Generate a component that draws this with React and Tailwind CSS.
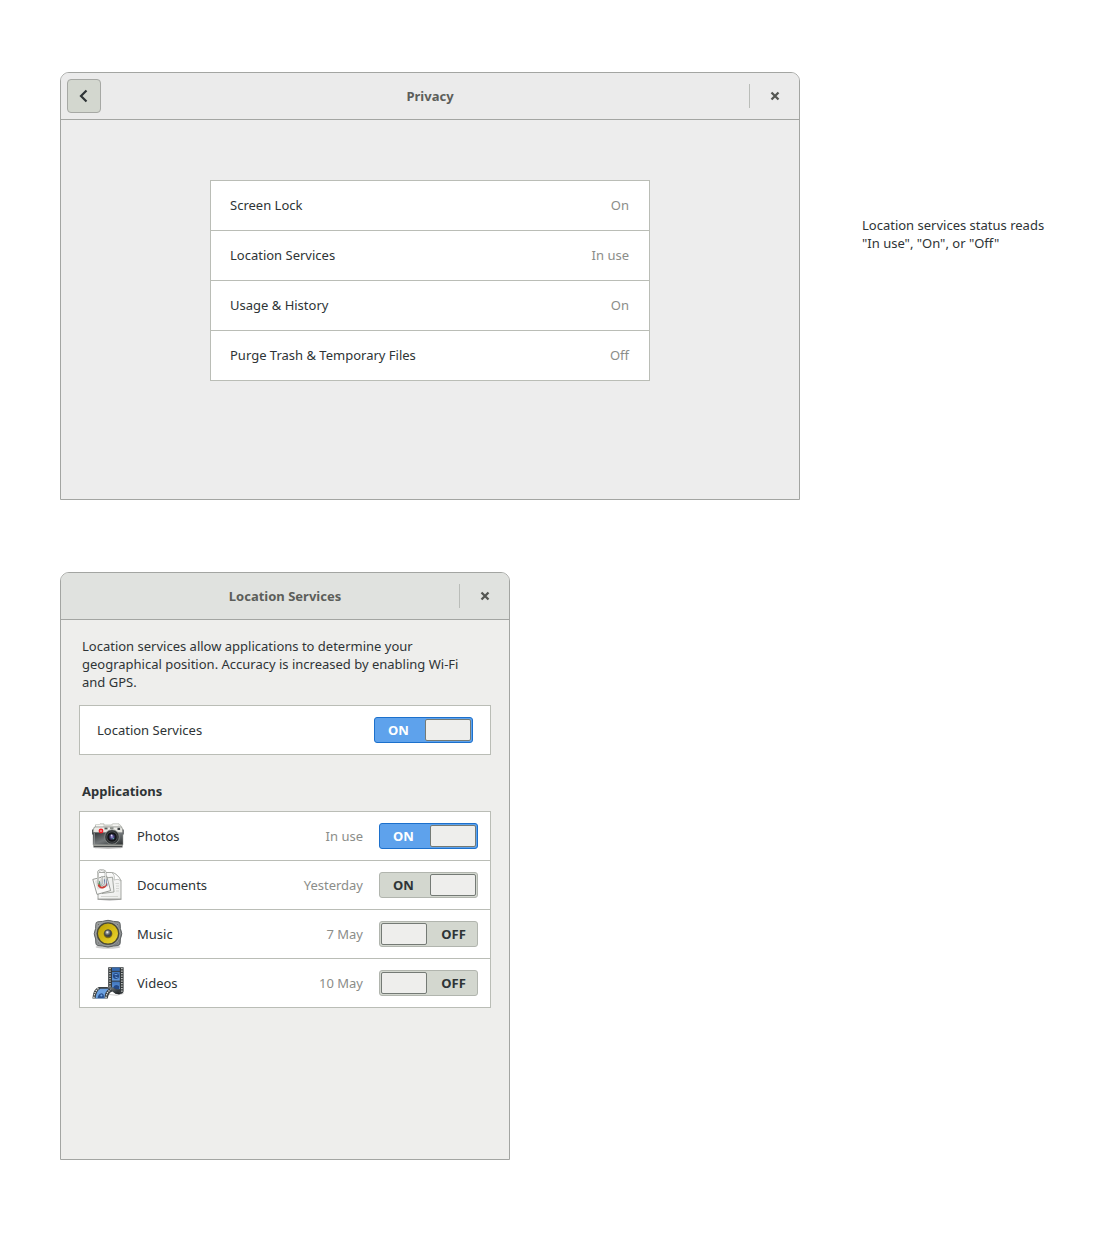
import { useState } from "react";

function ChevronLeft() {
  return (
    <svg width="16" height="16" viewBox="0 0 16 16" aria-hidden="true">
      <path d="M10.5 2.5 L5 8 L10.5 13.5" fill="none" stroke="#2e3436" strokeWidth="2.2" />
    </svg>
  );
}

function CloseGlyph() {
  return (
    <svg width="16" height="16" viewBox="0 0 16 16" aria-hidden="true">
      <path d="M4.5 4.5 L11.5 11.5 M11.5 4.5 L4.5 11.5" fill="none" stroke="#555753" strokeWidth="2.3" />
    </svg>
  );
}

function CameraIcon() {
  return (
    <svg width="32" height="32" viewBox="0 0 32 32" aria-hidden="true">
      <defs>
        <linearGradient id="cam-top" x1="0" y1="0" x2="0" y2="1">
          <stop offset="0" stopColor="#f2f2ee" />
          <stop offset="1" stopColor="#b4b5ae" />
        </linearGradient>
        <linearGradient id="cam-body" x1="0" y1="0" x2="1" y2="1">
          <stop offset="0" stopColor="#2c3032" />
          <stop offset="0.5" stopColor="#74787a" />
          <stop offset="1" stopColor="#2b2f30" />
        </linearGradient>
        <radialGradient id="cam-lens">
          <stop offset="0" stopColor="#a89bdc" />
          <stop offset="0.5" stopColor="#474280" />
          <stop offset="1" stopColor="#15161c" />
        </radialGradient>
      </defs>
      <ellipse cx="16" cy="27.4" rx="15" ry="1.3" fill="#000" opacity="0.3" />
      <path d="M3.5 7 V4.8 H7 L8 3.8 H12 V5 H19.5 L20.5 3.8 H27 L30 7 V11 H2 V7 Z" fill="url(#cam-top)" stroke="#a5a7a0" strokeWidth="0.6" />
      <path d="M1.2 11 Q1.2 7.4 3.5 7 H28.5 Q30.8 7.4 30.8 11 V24.5 L29.8 26.6 H2.2 L1.2 24.5 Z" fill="url(#cam-top)" stroke="#7b7e78" strokeWidth="0.6" />
      <rect x="1.2" y="12.4" width="29.6" height="12.2" fill="url(#cam-body)" />
      <path d="M1.5 26.3 H30.5" stroke="#343839" strokeWidth="1" />
      <path d="M0.6 9.5 V14.5 M31.2 9.5 V14.5" stroke="#44484a" strokeWidth="1" />
      <path d="M2.4 13 V24" stroke="#96999a" strokeWidth="0.8" />
      <path d="M4 5.7 H11 M21 5.2 H26" stroke="#fff" strokeWidth="0.9" />
      <rect x="12.5" y="7.6" width="3" height="1.8" fill="#565b58" />
      <rect x="18" y="7.2" width="3.5" height="1.8" fill="#8b8f8a" />
      <rect x="25.5" y="7.8" width="2.6" height="2.2" fill="#3c4041" />
      <circle cx="20" cy="17" r="7.3" fill="#303335" stroke="#8d918e" strokeWidth="0.8" />
      <circle cx="20" cy="17" r="5.2" fill="#131517" stroke="#4f5356" strokeWidth="0.8" />
      <circle cx="20" cy="17" r="3.5" fill="url(#cam-lens)" />
      <circle cx="19.6" cy="15.4" r="0.9" fill="#e6e0fb" />
      <circle cx="21.4" cy="18.5" r="0.8" fill="#58ab9b" />
      <circle cx="9" cy="11" r="2.4" fill="#ee1d24" />
      <path d="M7.9 11 H10.1" stroke="#fff" strokeWidth="0.8" />
    </svg>
  );
}

function DocumentsIcon() {
  return (
    <svg width="32" height="32" viewBox="0 0 32 32" aria-hidden="true">
      <defs>
        <linearGradient id="doc-page" x1="0" y1="0" x2="1" y2="1">
          <stop offset="0" stopColor="#ffffff" />
          <stop offset="1" stopColor="#ebecea" />
        </linearGradient>
      </defs>
      <ellipse cx="17.5" cy="30.3" rx="12.5" ry="1.1" fill="#000" opacity="0.35" />
      <path d="M6 3.5 H19.5 Q25 4 29 11.5 V30 H6 Z" fill="url(#doc-page)" stroke="#8f928d" strokeWidth="0.8" />
      <path d="M19.5 3.5 Q23.5 5.8 22 11 Q26.5 9 29 12 Q25.5 4.5 19.5 3.5 Z" fill="#fff" stroke="#a1a49f" strokeWidth="0.6" />
      <path d="M23.5 14.5 H27 M24 17 H27 M24 19.5 H27 M24 22 H27 M9 27.5 H26" stroke="#d0d2ce" strokeWidth="0.9" />
      <path d="M9 9.5 L20.5 8.2 L22 23 L10 24.5 Z" fill="#f0f1ef" stroke="#92958f" strokeWidth="0.8" />
      <path d="M0.8 10.4 L14.6 7 L18.6 21.6 L5 25.4 Z" fill="#fafaf9" stroke="#80837e" strokeWidth="0.8" />
      <path d="M2.8 11.8 L13.6 9.1 L16 17.8 L5.6 20.8 Z" fill="#e1e3e0" />
      <path d="M5.4 12.6 L7.8 12 L9 17.4 L7 18 Z" fill="#5b9b6c" />
      <path d="M8.2 13 L10.6 12.4 L11.4 16.4 L9.3 17 Z" fill="#a9c6e6" />
      <path d="M12 10.6 L14.4 10 L15.6 16.4 L13 17 Z" fill="#4568b4" />
      <path d="M6.4 15.5 Q7.6 19.2 10.8 18.6 Q14 17.8 14.2 14.4" fill="none" stroke="#cf3b35" strokeWidth="1.8" />
      <path d="M6 14.5 V4.2 Q6 1.2 9.5 1.2 Q13.6 1.2 13.6 4.2 V14.2 Q13.6 16.4 11.7 16.4 Q9.8 16.4 9.8 14.2 V7" fill="none" stroke="#989b96" strokeWidth="1.8" />
      <path d="M6 14.2 V4.2 Q6 1.2 9.5 1.2 Q13.6 1.2 13.6 4.2 V14.2 Q13.6 16.4 11.7 16.4 Q9.8 16.4 9.8 14.2 V7.3" fill="none" stroke="#fafafa" strokeWidth="0.8" />
    </svg>
  );
}

function SpeakerIcon() {
  return (
    <svg width="32" height="32" viewBox="0 0 32 32" aria-hidden="true">
      <defs>
        <linearGradient id="spk-frame" x1="0" y1="0" x2="1" y2="1">
          <stop offset="0" stopColor="#a6a8a5" />
          <stop offset="1" stopColor="#74787a" />
        </linearGradient>
        <linearGradient id="spk-cone" x1="0" y1="0" x2="1" y2="1">
          <stop offset="0" stopColor="#b89d05" />
          <stop offset="0.5" stopColor="#d5bb16" />
          <stop offset="1" stopColor="#efda3a" />
        </linearGradient>
        <radialGradient id="spk-dome" cx="0.4" cy="0.35">
          <stop offset="0" stopColor="#fff" />
          <stop offset="0.5" stopColor="#7f8384" />
          <stop offset="1" stopColor="#3c4042" />
        </radialGradient>
      </defs>
      <ellipse cx="16" cy="29" rx="12.5" ry="1.8" fill="#000" opacity="0.2" />
      <path d="M10.5 3.4 Q16 1.2 21.5 3.4 L26.2 3.8 Q28.2 4 28.2 6.3 L28.4 10.5 Q31.2 15.8 28.4 21 L28.2 25 Q28.2 27.3 26 27.5 L21.5 28 Q16 30.2 10.5 28 L6 27.5 Q3.8 27.3 3.8 25 L3.6 21 Q0.8 15.8 3.6 10.5 L3.8 6.3 Q3.8 4 5.8 3.8 Z" fill="url(#spk-frame)" stroke="#55595a" strokeWidth="0.9" />
      <circle cx="16" cy="15.6" r="12" fill="#696d6f" stroke="#b5b7b5" strokeWidth="0.6" />
      <circle cx="16" cy="15.6" r="10.6" fill="url(#spk-cone)" stroke="#4b4a35" strokeWidth="1.2" />
      <circle cx="16" cy="15.8" r="4.4" fill="#86740f" />
      <circle cx="16" cy="15.3" r="3.5" fill="url(#spk-dome)" stroke="#45484a" strokeWidth="0.8" />
      <g fill="#55595a" stroke="#c9cbc8" strokeWidth="0.4">
        <circle cx="6.3" cy="6.4" r="0.9" />
        <circle cx="25.7" cy="6.4" r="0.9" />
        <circle cx="6.3" cy="25" r="0.9" />
        <circle cx="25.7" cy="25" r="0.9" />
      </g>
    </svg>
  );
}

function FilmIcon() {
  return (
    <svg width="32" height="32" viewBox="0 0 32 32" aria-hidden="true">
      <defs>
        <linearGradient id="film-frame" x1="0" y1="0" x2="0" y2="1">
          <stop offset="0" stopColor="#3f74bb" />
          <stop offset="1" stopColor="#6299dd" />
        </linearGradient>
        <linearGradient id="film-fold" x1="0" y1="0" x2="1" y2="1">
          <stop offset="0" stopColor="#8b9092" />
          <stop offset="0.6" stopColor="#3b4144" />
          <stop offset="1" stopColor="#16191b" />
        </linearGradient>
      </defs>
      <path d="M17 27.5 Q25 29.5 31.5 26.5" fill="none" stroke="#000" strokeWidth="1" opacity="0.2" />
      <path d="M16.2 0.3 H31.6 V24 Q31.6 26.7 28 27 L18 21 H16.2 Z" fill="#33383b" />
      <rect x="20" y="0.5" width="7.8" height="3.4" fill="#3669ae" />
      <rect x="20" y="4.8" width="7.8" height="8.8" fill="url(#film-frame)" />
      <rect x="20" y="14.6" width="7.8" height="7.6" fill="url(#film-frame)" />
      <circle cx="24" cy="9" r="3" fill="#244a88" />
      <path d="M22.6 7.6 H25.4 M23.2 10 L25.6 10.8" stroke="#7eb0ea" strokeWidth="0.9" />
      <path d="M21 21 Q22.5 16 27 19 V22 H21 Z" fill="#244a88" />
      <path d="M18 1 V20 M29.9 1 V25" stroke="#e4e6e3" strokeWidth="1.3" strokeDasharray="1.3 1.2" />
      <path d="M0.4 31.6 Q1 21.8 6.8 20 H18.5 Q24 20.6 28.3 27 Q23.5 27.8 20.4 24.4 Q16.5 25.5 15.8 31.6 Z" fill="#3a4043" />
      <path d="M15 20.2 H18.5 Q24 20.6 28.3 27 Q23.5 27.8 20.2 23.6 Q18 21.5 15 20.2 Z" fill="url(#film-fold)" />
      <path d="M3.6 31.5 Q4 24 8.4 21.7 H17 Q12.6 24.6 12.4 31.5 Z" fill="#6ba1e2" />
      <path d="M5.6 31 Q6 26.8 9.6 26.2 Q12.6 26.6 11.8 31 Z" fill="#27508f" />
      <circle cx="9.4" cy="28.6" r="1" fill="#78ace9" />
      <path d="M1.9 31 Q2.4 24 7 21 M14 31 Q14.4 25 18.6 22.6" fill="none" stroke="#eceeeb" strokeWidth="1.3" strokeDasharray="1.3 1.1" />
    </svg>
  );
}

function HeaderBar({ title, tone, onBack }) {
  return (
    <header className={`grid h-[47px] grid-cols-[1fr_auto_1fr] items-center rounded-t-[8px] border-b border-[#a3a5a2] ${tone}`}>
      <div className="pl-1.5">
        {onBack && (
          <button type="button" aria-label="Back" onClick={onBack} className="flex size-[34px] items-center justify-center rounded-[4px] border border-[#a6a8a4] bg-[#d3d7cf]">
            <ChevronLeft />
          </button>
        )}
      </div>
      <h1 className="font-bold text-[#5c5e5a]">{title}</h1>
      <div className="flex items-center justify-end">
        <span className="h-6 w-px bg-[#babdb9]" />
        <button type="button" aria-label={`Close ${title}`} className="flex h-8 w-[49px] items-center justify-center">
          <CloseGlyph />
        </button>
      </div>
    </header>
  );
}

function Switch({ label, initial, active }) {
  const [on, setOn] = useState(initial);
  const track = on && active ? "border-[#1c70cc] bg-[#5ea2ec] text-white" : "border-[#b1b5ae] bg-[#d3d7cf] text-[#2e3436]";
  return (
    <label className={`relative flex h-[26px] w-[99px] shrink-0 items-center rounded-[3px] border p-px font-bold ${on ? "" : "flex-row-reverse"} ${track}`}>
      <input type="checkbox" role="switch" aria-label={label} checked={on} onChange={() => setOn(!on)} className="absolute inset-0 cursor-pointer opacity-0" />
      <span className={`flex-1 text-center ${on ? "pr-1" : "pl-1"}`}>{on ? "ON" : "OFF"}</span>
      <span className="h-[22px] w-[46px] rounded-[2px] border border-[#747a75] bg-[#eeeeec]" />
    </label>
  );
}

const privacyRows = [
  ["Screen Lock", "On"],
  ["Location Services", "In use"],
  ["Usage & History", "On"],
  ["Purge Trash & Temporary Files", "Off"],
];

const apps = [
  { name: "Photos", used: "In use", on: true, active: true, Icon: CameraIcon },
  { name: "Documents", used: "Yesterday", on: true, active: false, Icon: DocumentsIcon },
  { name: "Music", used: "7 May", on: false, active: false, Icon: SpeakerIcon },
  { name: "Videos", used: "10 May", on: false, active: false, Icon: FilmIcon },
];

export default function App() {
  return (
    <main className="flex min-h-screen flex-col gap-[72px] bg-white pt-[72px] pr-10 pb-20 pl-[60px] font-['Noto_Sans',sans-serif] text-[13px] leading-[18px] text-[#2e3436]">
      <div className="flex items-start gap-[62px]">
        <section className="min-w-0 flex-1 rounded-t-[9px] border border-[#a3a5a2] bg-[#ededed]">
          <HeaderBar title="Privacy" tone="bg-[#ebebeb]" onBack={() => {}} />
          <div className="px-6 pt-[60px] pb-[118px]">
            <ul className="mx-auto max-w-[440px] divide-y divide-[#babdb6] border border-[#babdb6] bg-white">
              {privacyRows.map(([name, status]) => (
                <li key={name}>
                  <button type="button" className="flex h-[49px] w-full items-center justify-between pr-5 pb-0.5 pl-[19px] text-left">
                    <span>{name}</span>
                    <span className="text-[#8b8d89]">{status}</span>
                  </button>
                </li>
              ))}
            </ul>
          </div>
        </section>
        <p className="w-[198px] pt-36">
          Location services status reads "In use", "On", or "Off"
        </p>
      </div>

      <section className="w-full max-w-[450px] rounded-t-[9px] border border-[#a3a5a2] bg-[#eeeeec]">
        <HeaderBar title="Location Services" tone="bg-[#e0e2df]" />
        <div className="px-[18px] pt-[17px] pb-[151px]">
          <p className="pr-5 pl-[3px]">
            Location services allow applications to determine your geographical position. Accuracy is increased by enabling Wi-Fi and GPS.
          </p>
          <div className="mt-[14px] flex h-[50px] items-center justify-between border border-[#babdb6] bg-white px-[17px]">
            <span>Location Services</span>
            <Switch label="Location Services" initial active />
          </div>
          <h2 className="mt-[27px] px-[3px] font-bold">Applications</h2>
          <ul className="mt-[11px] divide-y divide-[#babdb6] border border-[#babdb6] bg-white">
            {apps.map(({ name, used, on, active, Icon }) => (
              <li key={name} className="flex h-[49px] items-center px-3 last:h-12">
                <Icon />
                <span className="ml-[13px] flex-1">{name}</span>
                <span className="mr-4 text-[#8b8d89]">{used}</span>
                <Switch label={name} initial={on} active={active} />
              </li>
            ))}
          </ul>
        </div>
      </section>
    </main>
  );
}
